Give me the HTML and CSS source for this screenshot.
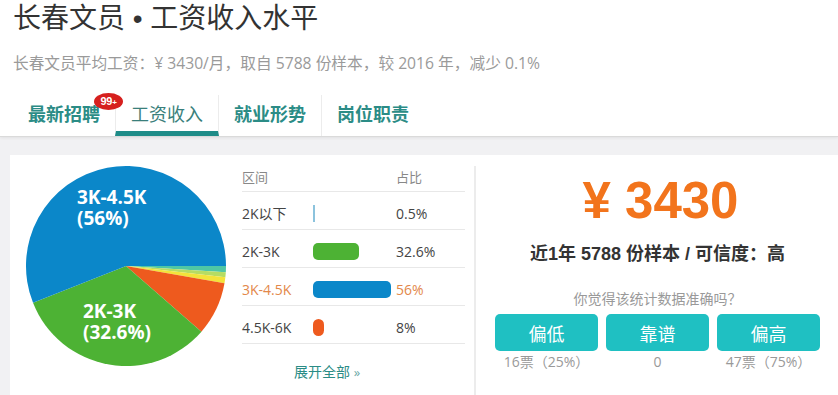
FILE: index.html
```html
<!DOCTYPE html>
<html lang="zh-CN">
<head>
<meta charset="utf-8">
<title>长春文员 • 工资收入水平</title>
<link rel="stylesheet" href="styles.css">
</head>
<body>
<header class="header">
  <h1 class="title">长春文员 • 工资收入水平</h1>
  <p class="subtitle">长春文员平均工资：¥ 3430/月，取自 5788 份样本，较 2016 年，减少 0.1%</p>
  <nav class="tabs">
    <a class="tab first">最新招聘<span class="badge">99<small>+</small></span></a>
    <a class="tab active">工资收入</a>
    <a class="tab">就业形势</a>
    <a class="tab">岗位职责</a>
  </nav>
</header>
<main class="main">
  <section class="card">
    <div class="pie-col">
      <svg class="pie" width="200" height="200" viewBox="0 0 200 200">
        <path d="M100,100 L200,100 A100,100 0 0 1 199.80,106.28 Z" fill="#4fc7a4"/>
        <path d="M100,100 L199.80,106.28 A100,100 0 0 1 199.36,111.32 Z" fill="#b6dc63"/>
        <path d="M100,100 L199.36,111.32 A100,100 0 0 1 198.48,117.36 Z" fill="#f3e33a"/>
        <path d="M100,100 L198.48,117.36 A100,100 0 0 1 175.42,165.66 Z" fill="#ee5a1e"/>
        <path d="M100,100 L175.42,165.66 A100,100 0 0 1 7.02,136.81 Z" fill="#4db234"/>
        <path d="M100,100 L7.02,136.81 A100,100 0 1 1 200,100 Z" fill="#0b87c9"/>
        <text class="pie-label"><tspan x="51" y="38">3K-4.5K</tspan><tspan x="51" y="59">(56%)</tspan></text>
        <text class="pie-label"><tspan x="57" y="152">2K-3K</tspan><tspan x="57" y="173">(32.6%)</tspan></text>
      </svg>
    </div>
    <div class="table">
      <div class="row head"><span>区间</span><span></span><span>占比</span></div>
      <div class="row"><span>2K以下</span><span class="bar-cell"><i class="bar thin" style="width:2px"></i></span><span>0.5%</span></div>
      <div class="row"><span>2K-3K</span><span class="bar-cell"><i class="bar green" style="width:46px"></i></span><span>32.6%</span></div>
      <div class="row hl"><span>3K-4.5K</span><span class="bar-cell"><i class="bar blue" style="width:78px"></i></span><span>56%</span></div>
      <div class="row"><span>4.5K-6K</span><span class="bar-cell"><i class="bar orange" style="width:11px"></i></span><span>8%</span></div>
      <a class="more">展开全部 <span class="raquo">»</span></a>
    </div>
    <div class="summary">
      <div class="price">¥ 3430</div>
      <div class="desc">近1年 5788 份样本 / 可信度：高</div>
      <div class="question">你觉得该统计数据准确吗？</div>
      <div class="votes">
        <div class="vote"><button class="btn">偏低</button><span class="count">16票（25%）</span></div>
        <div class="vote"><button class="btn">靠谱</button><span class="count">0</span></div>
        <div class="vote"><button class="btn">偏高</button><span class="count">47票（75%）</span></div>
      </div>
    </div>
  </section>
</main>
</body>
</html>
```

FILE: styles.css
```css
* { box-sizing: border-box; }
html, body { margin: 0; padding: 0; }
body {
  background: #f1f1f3;
  font-family: "Liberation Sans", "Noto Sans CJK SC", sans-serif;
  color: #333;
  overflow: hidden;
}
.header {
  background: #fff;
  border-bottom: 1px solid #dadada;
  box-shadow: 0 1px 3px rgba(0,0,0,0.07);
  position: relative;
}
.title {
  margin: 0;
  padding-left: 13px;
  font-family: "Liberation Sans", "Noto Sans CJK SC", sans-serif;
  font-weight: normal;
  font-size: 28px;
  line-height: 38px;
  color: #333;
}
.subtitle {
  margin: 14px 0 0;
  padding-left: 13px;
  font-family: "Open Sans", "Noto Sans CJK SC", sans-serif;
  font-size: 15.7px;
  line-height: 22px;
  color: #9a9a9a;
}
.tabs {
  display: flex;
  margin-top: 21px;
  padding-left: 13px;
  height: 41px;
}
.tab {
  position: relative;
  display: block;
  padding: 0 15px;
  font-family: "Noto Sans CJK SC", sans-serif;
  font-weight: bold;
  font-size: 18px;
  line-height: 36px;
  color: #2b8c86;
  border-left: 1px solid #ececec;
}
.tab.first { border-left: none; z-index: 2; }
.tab.active {
  font-weight: normal;
  color: #3a7f7b;
  border-right: 1px solid #ececec;
  border-bottom: 5px solid #1e8c88;
}
.tab.active + .tab { border-left: none; }
.badge {
  position: absolute;
  z-index: 3;
  left: 81px;
  top: -2px;
  width: 29px;
  height: 17px;
  border-radius: 50%;
  background: #d6201e;
  color: #fff;
  font-family: "Liberation Sans", sans-serif;
  font-weight: bold;
  font-size: 11px;
  line-height: 17px;
  text-align: center;
  letter-spacing: -0.3px;
}
.badge small { font-size: 8px; }
.main { padding: 18px 0 0 10px; }
.card {
  display: flex;
  background: #fff;
  min-height: 260px;
}
.pie-col {
  width: 232px;
  flex: none;
  padding: 11px 0 0 16px;
}
.pie { display: block; }
.pie-label {
  fill: #fff;
  font-family: "Open Sans", sans-serif;
  font-weight: bold;
  font-size: 19px;
}
.table {
  width: 223px;
  flex: none;
  margin-top: 10px;
  margin-right: 9px;
  font-family: "Open Sans", "Noto Sans CJK SC", sans-serif;
  font-size: 14px;
  color: #444;
}
.row {
  display: grid;
  grid-template-columns: 71px 83px 1fr;
  align-items: center;
  height: 38px;
  padding-top: 5px;
  border-bottom: 1px solid #e8e8e8;
}
.row.head {
  height: 27px;
  padding-top: 0;
  align-items: start;
  line-height: 24px;
  font-size: 13px;
  color: #888;
}
.row.hl { color: #e3884a; }
.bar-cell { display: flex; align-items: center; }
.bar {
  display: block;
  height: 17px;
  border-radius: 5px;
}
.bar.thin { background: #8cc3dd; border-radius: 0; }
.bar.green { background: #4db234; }
.bar.blue { background: #0b87c9; }
.bar.orange { background: #ee5a1e; border-radius: 6px; }
.more {
  display: block;
  padding-left: 52px;
  margin-top: 18px;
  font-size: 14px;
  line-height: 20px;
  color: #2b8c86;
}
.raquo { color: #6aa9a6; font-size: 13px; }
.summary {
  flex: 1;
  margin-top: 11px;
  border-left: 2px solid #ececec;
  padding: 7px 18px 0 19px;
  text-align: center;
}
.price {
  font-family: "Liberation Sans", sans-serif;
  font-weight: bold;
  font-size: 51px;
  line-height: 56px;
  color: #f2741c;
  padding-left: 6px;
}
.desc {
  margin-top: 13px;
  font-weight: bold;
  font-size: 18px;
  line-height: 24px;
  color: #333;
}
.question {
  margin-top: 22px;
  font-family: "Noto Sans CJK SC", sans-serif;
  font-size: 14px;
  line-height: 20px;
  color: #999;
}
.votes {
  display: flex;
  gap: 8px;
  margin-top: 6px;
}
.vote {
  flex: 1;
  display: flex;
  flex-direction: column;
  align-items: center;
}
.btn {
  width: 100%;
  height: 37px;
  border: none;
  border-radius: 5px;
  background: #1fc0c2;
  color: #fff;
  font-family: "Noto Sans CJK SC", sans-serif;
  font-size: 18px;
  padding: 0;
}
.count {
  margin-top: 1px;
  font-family: "Open Sans", "Noto Sans CJK SC", sans-serif;
  font-size: 14px;
  line-height: 20px;
  color: #999;
}
```
